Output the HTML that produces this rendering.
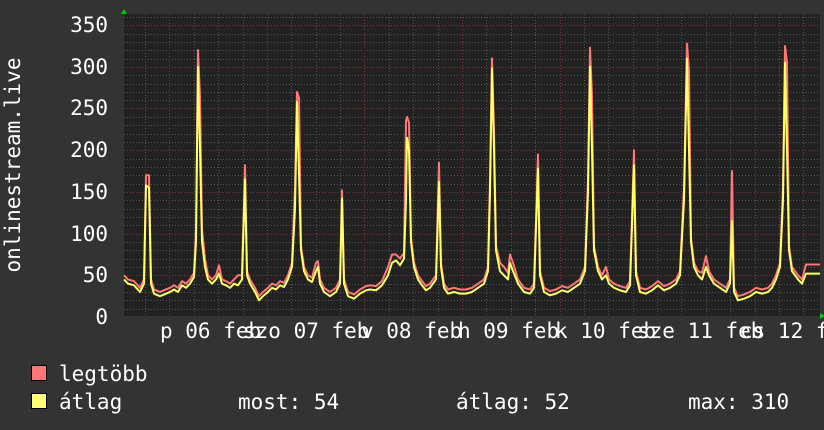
<!DOCTYPE html>
<html><head><meta charset="utf-8"><style>
html,body{margin:0;padding:0;background:#333;}
svg{display:block;}
text{font-family:"DejaVu Sans Mono","Liberation Mono",monospace;fill:#fff;font-size:21px;}
</style></head><body>
<svg width="824" height="430" viewBox="0 0 824 430" xmlns="http://www.w3.org/2000/svg">
<rect width="824" height="430" fill="#333"/>
<rect x="124" y="14" width="696" height="302" fill="#222"/>
<g stroke="#555" stroke-width="1" stroke-dasharray="1,2">
<path d="M124 17.5H820M124 34.5H820M124 42.5H820M124 50.5H820M124 59.5H820M124 75.5H820M124 84.5H820M124 92.5H820M124 100.5H820M124 117.5H820M124 125.5H820M124 134.5H820M124 142.5H820M124 159.5H820M124 167.5H820M124 175.5H820M124 184.5H820M124 200.5H820M124 209.5H820M124 217.5H820M124 225.5H820M124 242.5H820M124 250.5H820M124 259.5H820M124 267.5H820M124 284.5H820M124 292.5H820M124 300.5H820M124 309.5H820"/>
<path d="M145.5 14V316M194.5 14V316M218.5 14V316M243.5 14V316M291.5 14V316M316.5 14V316M340.5 14V316M389.5 14V316M413.5 14V316M438.5 14V316M486.5 14V316M511.5 14V316M535.5 14V316M584.5 14V316M608.5 14V316M633.5 14V316M681.5 14V316M706.5 14V316M730.5 14V316M779.5 14V316M803.5 14V316"/>
</g>
<g stroke="#7a3a3a" stroke-width="1" stroke-dasharray="1,2">
<path d="M124 25.5H820M124 67.5H820M124 108.5H820M124 150.5H820M124 192.5H820M124 234.5H820M124 275.5H820"/>
<path d="M169.5 14V316M267.5 14V316M364.5 14V316M462.5 14V316M560.5 14V316M657.5 14V316M755.5 14V316"/>
</g>
<g transform="translate(0,317) scale(1,-0.834)" fill="none" stroke-width="2" stroke-linejoin="round">
<polyline vector-effect="non-scaling-stroke" stroke="#ff7777" transform="translate(0,5)" points="124,45 128,40 134,38 140,30 144,40 146,165 149,165 151,40 154,28 160,25 166,28 170,30 174,33 178,30 182,38 186,35 190,40 194,48 196,100 198,315 200,260 202,100 205,65 208,45 212,40 216,45 219,57 222,40 226,38 230,35 234,40 238,45 242,45 245,177 247,50 250,40 255,30 259,20 263,25 268,30 272,35 276,33 280,38 284,36 288,45 292,60 295,150 297,265 299,258 301,80 304,55 308,45 312,42 316,60 318,62 320,40 324,30 330,25 336,30 340,40 342,147 344,40 348,25 354,22 360,28 366,32 370,33 376,32 382,38 388,55 392,70 396,70 400,65 404,72 406,230 407,235 409,228 411,90 414,60 418,45 422,38 426,32 430,35 436,45 439,180 441,60 444,35 448,28 454,30 460,28 466,28 472,30 478,35 484,40 488,55 490,160 492,305 494,220 496,80 500,60 504,55 508,48 510,70 513,60 518,40 524,30 530,28 534,35 538,190 540,50 544,30 550,26 556,28 562,32 568,30 574,35 580,40 585,55 588,160 590,318 592,260 594,80 598,55 602,45 606,55 609,40 614,35 620,32 626,30 630,38 634,195 636,50 640,30 646,28 652,32 658,38 664,32 670,35 676,40 680,50 684,150 687,323 689,290 691,90 694,60 698,50 702,48 706,68 709,50 714,40 720,35 726,30 730,40 732,170 734,30 738,20 744,22 750,25 756,30 762,28 768,30 772,35 776,45 780,60 783,150 785,320 787,300 789,80 792,55 798,45 802,40 806,58 820,58"/>
<polyline vector-effect="non-scaling-stroke" stroke="#ffff66" points="124,45 128,40 134,38 140,30 144,40 146,158 149,155 151,40 154,28 160,25 166,28 170,30 174,33 178,30 182,38 186,35 190,40 194,48 196,90 198,300 200,200 202,90 205,60 208,45 212,40 216,45 219,52 222,40 226,38 230,35 234,40 238,38 242,45 245,165 247,50 250,40 255,30 259,20 263,25 268,30 272,35 276,33 280,38 284,36 288,45 292,60 295,130 297,258 299,170 301,80 304,55 308,45 312,42 316,55 318,60 320,40 324,30 330,25 336,30 340,40 342,142 344,40 348,25 354,22 360,28 366,32 370,33 376,32 382,38 388,50 392,65 396,68 400,62 404,70 406,140 407,215 409,200 411,90 414,60 418,45 422,38 426,32 430,35 436,45 439,162 441,60 444,35 448,28 454,30 460,28 466,28 472,30 478,35 484,40 488,55 490,150 492,298 494,200 496,80 500,55 504,50 508,45 510,65 513,55 518,40 524,30 530,28 534,35 538,178 540,50 544,30 550,26 556,28 562,32 568,30 574,35 580,40 585,55 588,150 590,300 592,200 594,80 598,55 602,45 606,50 609,40 614,35 620,32 626,30 630,38 634,182 636,50 640,30 646,28 652,32 658,38 664,32 670,35 676,40 680,50 684,140 687,310 689,200 691,90 694,60 698,50 702,45 706,60 709,50 714,40 720,35 726,30 730,40 732,115 734,30 738,20 744,22 750,25 756,30 762,28 768,30 772,35 776,45 780,60 783,140 785,305 787,200 789,80 792,55 798,45 802,40 806,52 820,52"/>
</g>
<path d="M121 14l3-5 3 5z" fill="#0c0"/>
<path d="M820 313l5 3-5 3z" fill="#0c0"/>
<g text-anchor="end">
<text x="108" y="32">350</text><text x="108" y="74">300</text><text x="108" y="115">250</text><text x="108" y="157">200</text><text x="108" y="199">150</text><text x="108" y="241">100</text><text x="108" y="282">50</text><text x="108" y="324">0</text>
</g>
<text transform="translate(20,165) rotate(-90)" text-anchor="middle">onlinestream.live</text>
<g>
<text x="160" y="338">p 06 feb</text>
<text x="243" y="338">szo 07 feb</text>
<text x="361" y="338">v 08 feb</text>
<text x="458" y="338">h 09 feb</text>
<text x="555" y="338">k 10 feb</text>
<text x="637" y="338">sze 11 feb</text>
<text x="740" y="338">cs 12 f</text>
</g>
<rect x="31.5" y="365.5" width="15" height="15" fill="#ff7777" stroke="#000"/>
<rect x="31.5" y="393.5" width="15" height="15" fill="#ffff77" stroke="#000"/>
<text x="59" y="381">legtöbb</text>
<text x="59" y="409">átlag</text>
<text x="238" y="409">most: 54</text>
<text x="456" y="409">átlag: 52</text>
<text x="688" y="409">max: 310</text>
</svg>
</body></html>
